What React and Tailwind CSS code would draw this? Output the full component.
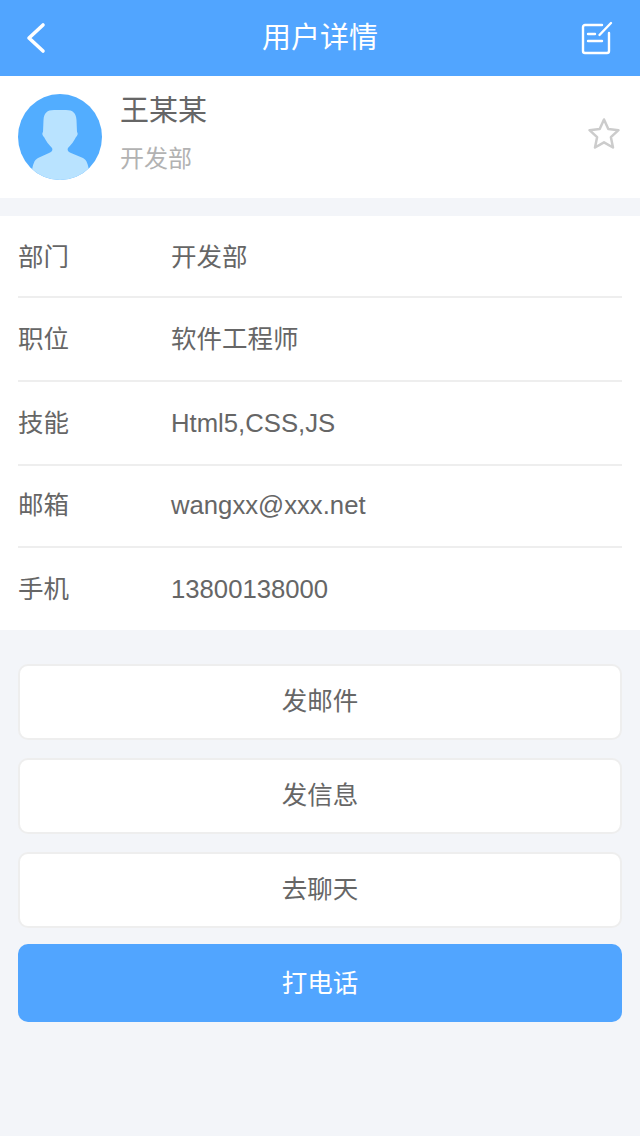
const font = "font-['Liberation_Sans','Noto_Sans_CJK_SC',sans-serif]";

const rows = [
  { label: "部门", value: "开发部", h: "h-[82px] pt-[2px]", v: "text-[25.5px]" },
  { label: "职位", value: "软件工程师", h: "h-[84px]", v: "text-[25.5px]" },
  { label: "技能", value: "Html5,CSS,JS", h: "h-[84px]", v: "text-[25.7px]" },
  { label: "邮箱", value: "wangxx@xxx.net", h: "h-[82px] pb-[2px]", v: "text-[25.7px]" },
  { label: "手机", value: "13800138000", h: "h-[82px]", v: "text-[25.7px]" },
];

function Avatar() {
  return (
    <svg width="84" height="86" viewBox="0 0 84 86" className="shrink-0">
      <ellipse cx="42" cy="43" rx="42" ry="43" fill="#52adff" />
      <clipPath id="av"><ellipse cx="42" cy="43" rx="42" ry="43" /></clipPath>
      <path
        clipPath="url(#av)"
        d="M36 16H48C55 16 58 19 58.500 26L59 38C60 39 60 41 58 43C56 47 53 51 50 54C49 56 50 58 53 59L65 64C69 66 70 71 71 76L71 90H14V76C15 71 16 66 20 64L31 59C34 58 35 56 34 54C31 51 28 47 26 43C24 41 24 39 25 38L25.500 26C26 19 29 16 36 16Z"
        fill="#b9e3ff"
      />
    </svg>
  );
}

function Btn({ children, primary, cls }) {
  return (
    <div
      className={
        "flex items-center justify-center rounded-[10px] text-[25.5px] " +
        (primary
          ? "bg-[#51a5ff] text-white h-[78px] "
          : "bg-white border-2 border-[#eeeeee] text-[#666666] h-[76px] pb-[1px] ") +
        cls
      }
    >
      {children}
    </div>
  );
}

export default function App() {
  return (
    <div className={"w-[640px] h-[1136px] bg-[#f3f5f9] flex flex-col " + font}>
      <header className="h-[76px] bg-[#51a5ff] flex items-center justify-between pl-[26px] pr-[26px] shrink-0">
        <div className="w-[34px]">
          <svg width="20" height="32" viewBox="0 0 20 32" fill="none">
            <path d="M17 3 3 16l14 13" stroke="#fff" strokeWidth="3.600" strokeLinecap="round" strokeLinejoin="round" />
          </svg>
        </div>
        <h1 className="text-[29px] text-white font-normal pt-[2px]">用户详情</h1>
        <svg width="34" height="34" viewBox="0 0 34 34" fill="none" stroke="#fff" strokeWidth="2.400" strokeLinecap="round">
          <path d="M22 4H5a2 2 0 0 0-2 2v24a2 2 0 0 0 2 2h22a2 2 0 0 0 2-2V12" />
          <path d="M19.500 14 31 2" />
          <path d="M8 13h7" />
          <path d="M8 20h14" />
        </svg>
      </header>

      <section className="h-[122px] bg-white flex items-center pl-[18px] pr-[18px] shrink-0">
        <Avatar />
        <div className="ml-[18px] mb-[5px] flex-1 flex flex-col">
          <div className="text-[29px] leading-[36px] text-[#666666]">王某某</div>
          <div className="text-[24px] leading-[36px] mt-[12px] text-[#b2b2b2]">开发部</div>
        </div>
        <svg width="36" height="36" viewBox="0 0 36 36" fill="none" className="mb-[6px]">
          <path
            d="M18 3.500l4.300 9.500 10.200 1.200-7.600 7 2.100 10.300L18 26.300l-9 5.200 2.100-10.300-7.600-7L13.700 13z"
            stroke="#cccccc"
            strokeWidth="2.500"
            strokeLinejoin="round"
          />
        </svg>
      </section>

      <section className="mt-[18px] bg-white px-[18px] shrink-0">
        {rows.map((r, i) => (
          <div
            key={r.label}
            className={"flex items-center text-[#666666] " + r.h + (i < rows.length - 1 ? " border-b-2 border-[#eeeeee]" : "")}
          >
            <span className="w-[153px] shrink-0 text-[25.5px]">{r.label}</span>
            <span className={r.v}>{r.value}</span>
          </div>
        ))}
      </section>

      <section className="mt-[34px] px-[18px] flex flex-col">
        <Btn cls="">发邮件</Btn>
        <Btn cls="mt-[18px]">发信息</Btn>
        <Btn cls="mt-[18px]">去聊天</Btn>
        <Btn primary cls="mt-[16px]">打电话</Btn>
      </section>
    </div>
  );
}
